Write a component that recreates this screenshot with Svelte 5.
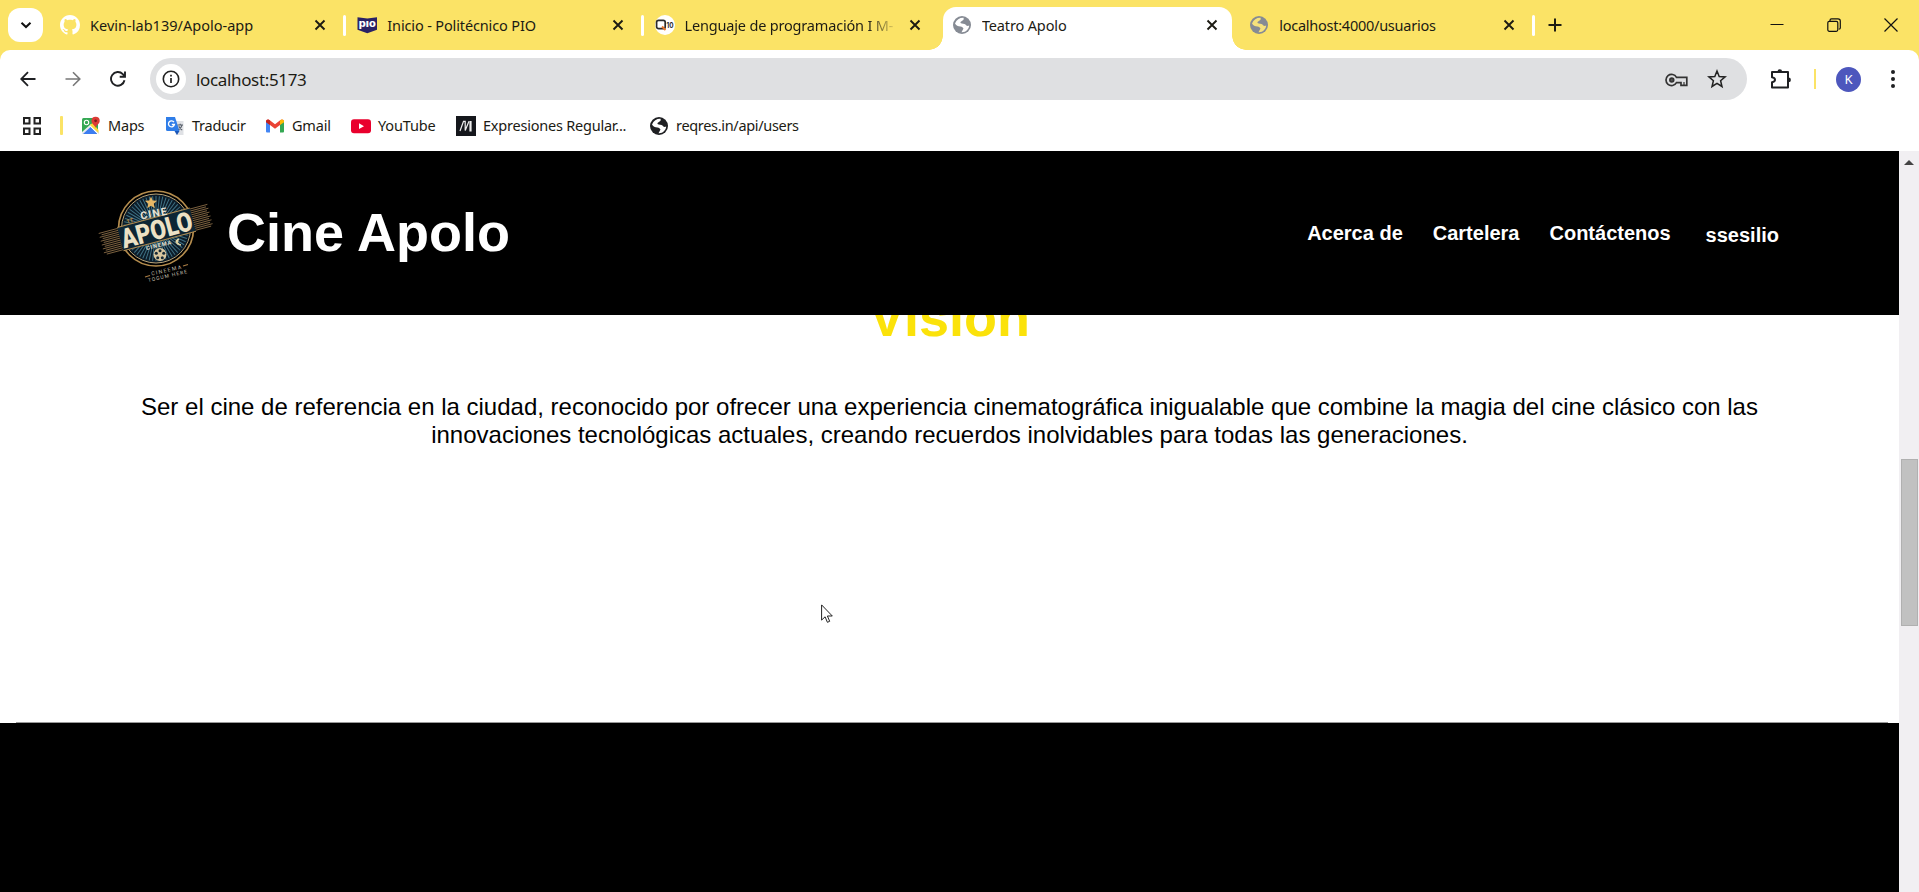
<script>
  const tabs = [
    { icon: 'github', title: 'Kevin-lab139/Apolo-app', ls: 0.02 },
    { icon: 'pio', title: 'Inicio - Politécnico PIO', ls: -0.14 },
    { icon: 'q10', title: 'Lenguaje de programación I M-', ls: -0.18, fade: true },
    { icon: 'globe', title: 'Teatro Apolo', ls: -0.14, active: true },
    { icon: 'globe', title: 'localhost:4000/usuarios', ls: -0.25 }
  ];
  const bookmarks = [
    { icon: 'maps', label: 'Maps', w: 59, ls: -0.2 },
    { icon: 'translate', label: 'Traducir', w: 75, ls: -0.25 },
    { icon: 'gmail', label: 'Gmail', w: 61, ls: -0.2 },
    { icon: 'youtube', label: 'YouTube', w: 80, ls: -0.15 },
    { icon: 'm', label: 'Expresiones Regular...', w: 168, ls: -0.22 },
    { icon: 'globeDark', label: 'reqres.in/api/users', w: 130, ls: -0.32 }
  ];
  const nav = ['Acerca de', 'Cartelera', 'Contáctenos'];
  const rays = Array.from({ length: 60 }, (_, i) => i * 6);
</script>

{#snippet globe(color, sea)}
  <svg viewBox="0 0 20 20" width="20" height="20">
    <circle cx="10" cy="10" r="9" fill={color} />
    <path fill={sea} d="M11.500 2.800C8 2.600 4.500 4.500 3 8.500 4 10.500 6 11.500 8.500 11.500c1.500 0 2 .8 3 2L9.500 17.200C14 17.500 17 14 17.200 10.500 15.500 11.500 14 10.500 13.500 9.500 12.500 8.500 10 9 8.500 8 8 6.500 10 6.200 10.500 5.500 12 5 11.800 3.500 11.500 2.800Z" />
  </svg>
{/snippet}

{#snippet icon(name, active)}
  {#if name === 'github'}
    <svg viewBox="0 0 16 16" width="20" height="20"><path fill="#fff" d="M8 0C3.580 0 0 3.580 0 8c0 3.540 2.290 6.530 5.470 7.590.4.070.55-.17.55-.38 0-.19-.01-.82-.01-1.490-2.010.37-2.530-.49-2.690-.94-.09-.23-.48-.94-.82-1.130-.28-.15-.68-.52-.01-.53.63-.01 1.080.58 1.230.82.72 1.210 1.870.87 2.330.66.070-.52.280-.87.510-1.070-1.780-.2-3.640-.89-3.640-3.950 0-.87.310-1.590.82-2.150-.08-.2-.36-1.020.080-2.120 0 0 .67-.21 2.200.82.640-.18 1.320-.27 2-.27s1.360.09 2 .27c1.530-1.040 2.200-.82 2.200-.82.440 1.100.160 1.920.080 2.120.510.56.82 1.270.82 2.150 0 3.070-1.870 3.750-3.650 3.950.290.25.540.73.540 1.480 0 1.070-.01 1.930-.01 2.200 0 .210.150.460.550.380A8.010 8.010 0 0 0 16 8c0-4.420-3.580-8-8-8Z" /></svg>
  {:else if name === 'pio'}
    <svg viewBox="0 0 20 20" width="20" height="20">
      <path fill="#2a2266" d="M.5 2.200 10.300 3.600l9.700-1.400v12.600L10.300 18.200.5 14.800Z" />
      <text x="10.300" y="12.200" text-anchor="middle" fill="#fff" font-family="Inter, sans-serif" font-size="9.500" font-weight="800" textLength="17" lengthAdjust="spacingAndGlyphs">pıo</text>
    </svg>
  {:else if name === 'q10'}
    <svg viewBox="0 0 20 20" width="20" height="20">
      <circle cx="10" cy="10" r="10" fill="#fff" />
      <rect x="1.600" y="5.300" width="8.600" height="8.400" rx="2" fill="none" stroke="#2b2b2b" stroke-width="1.700" />
      <path d="m7 11.500 3.500 3.500" stroke="#e8732a" stroke-width="2" />
      <text x="11.600" y="12.800" fill="#2b2b2b" font-family="Inter, sans-serif" font-size="7" font-weight="700" textLength="7" lengthAdjust="spacingAndGlyphs">10</text>
    </svg>
  {:else if name === 'globe'}
    {@render globe('#868b94', active ? '#fff' : '#f6e27c')}
  {:else if name === 'globeDark'}
    {@render globe('#1f2023', '#fff')}
  {:else if name === 'maps'}
    <svg viewBox="0 0 20 20" width="20" height="20">
      <rect x="1" y="2" width="16" height="16" rx="1.500" fill="#34a853" />
      <path d="m1 16 9-8 8 8v2H1Z" fill="#e8eaed" />
      <path d="M2 18 9.500 11l7 7Z" fill="#3c7df0" />
      <path d="m9 9 2.500-2 6 7v3Z" fill="#fdd835" />
      <path d="M9 10 17 18" stroke="#fff" stroke-width="1" />
      <circle cx="5.500" cy="6.500" r="2.200" fill="none" stroke="#fff" stroke-width="1.100" />
      <path d="M14.500 12c-.5-3-4-3.700-4-7.200a4 4 0 0 1 8.200 0c0 3.500-3.700 4.200-4.200 7.200Z" fill="#dc3b35" />
      <circle cx="14.600" cy="4.800" r="1.400" fill="#7c1c18" />
    </svg>
  {:else if name === 'translate'}
    <svg viewBox="0 0 20 20" width="20" height="20">
      <path d="M8 5h10.500v14H11Z" fill="#dfe1e5" />
      <path d="M1 1h9l4.500 14H2.500A1.500 1.500 0 0 1 1 13.500Z" fill="#2f7de8" />
      <path d="m9.500 15 2.500 4 2.500-4Z" fill="#1a56b8" />
      <path d="M9 6.200A3 3 0 1 0 9.400 8.500H6.800" fill="none" stroke="#fff" stroke-width="1.300" />
      <path d="M12.500 9H18M15.200 7.800V9m1.800.2c-.5 2-1.800 3.700-3.400 4.600m.2-3.500c.7 1.600 2 2.900 3.400 3.800" stroke="#555d68" stroke-width="1.100" fill="none" />
    </svg>
  {:else if name === 'gmail'}
    <svg viewBox="0 0 20 20" width="20" height="20">
      <path d="M1 5v10.500a1 1 0 0 0 1 1h3V8Z" fill="#4285f4" />
      <path d="M19 5v10.500a1 1 0 0 1-1 1h-3V8Z" fill="#34a853" />
      <path d="M1 5.500C1 3.500 3 2.800 4.500 4L10 8.200 15.500 4C17 2.800 19 3.500 19 5.500L15 9l-5 3.800L5 9Z" fill="#ea4335" />
      <path d="M1 5.500C1 4 2.300 3.200 3.500 3.500L5 4.500V9L1 6.200Z" fill="#c5221f" />
      <path d="M19 5.500c0-1.500-1.300-2.300-2.500-2L15 4.500V9l4-2.800Z" fill="#fbbc04" />
    </svg>
  {:else if name === 'youtube'}
    <svg viewBox="0 0 20 20" width="20" height="20"><rect x="0" y="3.200" width="20" height="14" rx="3" fill="#e9002d" /><path d="m8 7.300 5 2.900-5 2.900Z" fill="#fff" /></svg>
  {:else if name === 'm'}
    <svg viewBox="0 0 20 20" width="20" height="20"><path fill="#15171c" d="M0 0h20v20H0Z" /><path d="M4 15 7.500 5.300H9.200V14.500L13 5.300" fill="none" stroke="#eee" stroke-width="1.200" /><path d="M14.500 5v10.500" fill="none" stroke="#eee" stroke-width="2.200" /></svg>
  {/if}
{/snippet}

<div class="window">
  <div class="tabstrip">
    <button class="search" aria-label="Buscar pestañas"><svg viewBox="0 0 12 12" width="12" height="12"><path d="m1.500 3.700 4.500 4.300 4.500-4.300" fill="none" stroke="#111" stroke-width="2" /></svg></button>
    <div class="tabs">
      {#each tabs as tab, i}
        <div class="tab" class:active={tab.active} class:divided={i !== 2 && !tab.active}>
          <span class="favicon">{@render icon(tab.icon, tab.active)}</span>
          <span class="title"><span class:fade={tab.fade} style:letter-spacing="{tab.ls}px">{tab.title}</span></span>
          <svg class="close" viewBox="0 0 12 12" width="12" height="12"><path d="m1.500 1.500 9 9m0-9-9 9" stroke="#1c1b12" stroke-width="1.900" /></svg>
        </div>
      {/each}
    </div>
    <svg class="plus" viewBox="0 0 14 14" width="14" height="14"><path d="M7 .5v13M.5 7h13" stroke="#1f1d12" stroke-width="2" /></svg>
    <div class="controls">
      <svg viewBox="0 0 14 14" width="14" height="14"><path d="M.5 6.500h13" stroke="#111" /></svg>
      <svg viewBox="0 0 14 14" width="14" height="14"><g fill="none" stroke="#111" stroke-width="1.200"><rect x=".8" y="3.300" width="10" height="10" rx="1.500" /><path d="M3 3V2.200Q3 .8 4.500.8H11Q13.300.8 13.300 3V10q0 1.200-1.500 1.200" /></g></svg>
      <svg viewBox="0 0 14 14" width="14" height="14"><path d="m.5.500 13 13m0-13-13 13" stroke="#111" stroke-width="1.200" /></svg>
    </div>
  </div>

  <div class="chrome">
    <div class="toolbar">
      <svg class="nav-icon" viewBox="0 0 16 16" width="16" height="16"><path d="M15.500 8H1.500M8 1.200 1.200 8 8 14.800" fill="none" stroke="#1f2023" stroke-width="1.800" /></svg>
      <svg class="nav-icon" viewBox="0 0 16 16" width="16" height="16"><path d="M.5 8h14M8 1.200 14.800 8 8 14.800" fill="none" stroke="#777" stroke-width="1.600" /></svg>
      <svg class="nav-icon" viewBox="0 0 16 16" width="16" height="16"><path d="M14.500 9.200A6.800 6.800 0 1 1 12.800 3.200L14.500 5M15 .5v5.300H9.700" fill="none" stroke="#1f2023" stroke-width="1.900" /></svg>
      <div class="omnibox">
        <span class="info"><svg viewBox="0 0 18 18" width="18" height="18"><circle cx="9" cy="9" r="7.700" fill="none" stroke="#222" stroke-width="1.600" /><path d="M9 8v5M9 4.700v1.800" stroke="#222" stroke-width="1.700" /></svg></span>
        <span class="url">localhost:5173</span>
        <svg class="key" viewBox="0 0 24 14" width="24" height="14"><g fill="none" stroke="#333" stroke-width="1.700"><path d="M11.500 4.300A5.600 5.600 0 1 0 11.500 9.700H16V12.300h5.800V4.300Z" /><circle cx="6.800" cy="7" r="1.900" fill="#555" /><path d="M19 12V9" stroke-width="1.200" /></g></svg>
        <svg class="star" viewBox="0 0 20 20" width="20" height="20"><path d="m10 2 2.200 5.500 5.900.4-4.500 3.800 1.400 5.800-5-3.200-5 3.200 1.400-5.800L1.900 7.900l5.900-.4Z" fill="none" stroke="#222" stroke-width="1.500" /></svg>
      </div>
      <svg class="puzzle" viewBox="0 0 22 22" width="22" height="22"><path d="M2 4h16v15.500H2v-5.200q3-.4 3-2.500T2 9.200Z" fill="none" stroke="#1f2023" stroke-width="2" stroke-linejoin="round" /><path d="M7.500 3.500a2.300 2.300 0 0 1 4.600 0Zm11 6v4.800a2.400 2.400 0 0 0 0-4.800Z" fill="#1f2023" /></svg>
      <i class="bar"></i>
      <span class="avatar">K</span>
      <svg class="menu" viewBox="0 0 4 18" width="4" height="18"><circle cx="2" cy="2" r="2" /><circle cx="2" cy="9" r="2" /><circle cx="2" cy="16" r="2" /></svg>
    </div>
    <div class="bookmarks">
      <svg class="apps" viewBox="0 0 18 18" width="18" height="18"><path d="M1 1h5.500v5.500H1ZM11.500 1H17v5.500h-5.500ZM1 11.500h5.500V17H1ZM11.500 11.500H17V17h-5.500Z" fill="none" stroke="#222" stroke-width="2" /></svg>
      <i class="mark-bar"></i>
      {#each bookmarks as b}
        <span class="bookmark" style:width="{b.w}px" style:letter-spacing="{b.ls}px">{@render icon(b.icon, false)}<span class="label">{b.label}</span></span>
      {/each}
    </div>
  </div>

  <div class="viewport">
    <div class="page">
      <header>
        <svg class="logo" viewBox="0 0 130 110" width="130" height="110">
          <circle cx="65" cy="48.500" r="34" fill="#0c1c29" />
          <g stroke="#3f7285" stroke-width="1">
            {#each rays as a}<path d="M65 38V16" transform="rotate({a} 65 48.500)" />{/each}
          </g>
          <circle cx="65" cy="48.500" r="37.500" fill="none" stroke="#b58d4e" stroke-width="1.700" />
          <circle cx="65" cy="48.500" r="34.500" fill="none" stroke="#cfb98a" stroke-width=".9" />
          <g transform="rotate(-15 65 49)">
            <path d="M11 40h108v20H11Z" fill="#090807" />
            <path d="M8.500 38.500h20M101 38.500h20M11 40.500h17M102 40.500h17M8.500 42.500h20M101 42.500h20M11 44.500h17M102 44.500h17M8.500 46.500h20M101 46.500h20M11 48.500h17M102 48.500h17M8.500 50.500h20M101 50.500h20M11 52.500h17M102 52.500h17M8.500 54.500h20M101 54.500h20M11 56.500h17M102 56.500h17M8.500 58.500h20M101 58.500h20M11 60.500h17M102 60.500h17" stroke="#7d6340" stroke-width=".9" />
            <path d="M28 37.500h75v24H28Z" fill="#0d2534" />
            <path d="M28 37.500h75M28 61.500h75" stroke="#b08b50" stroke-width="1" />
            <text x="65.500" y="59.500" text-anchor="middle" fill="#ece1c5" font-family="Roboto, sans-serif" font-weight="900" font-size="27" textLength="73" lengthAdjust="spacingAndGlyphs">APOLO</text>
          </g>
          <path d="m60 16.500 1.700 4 4.400.3-3.400 2.900 1.200 4.500-3.900-2.500-3.900 2.500 1.200-4.500-3.400-2.900 4.400-.3Z" fill="#e6b866" />
          <g font-family="Roboto, sans-serif" fill="#e9e3d4" text-anchor="middle">
            <text x="63" y="37" font-size="10.500" font-weight="700" letter-spacing="1.200" transform="rotate(-10 63 33)">CINE</text>
            <text x="39" y="43" font-size="6" font-weight="700" fill="#b98a45" transform="rotate(-15 39 41)">1T</text>
            <text x="68" y="67" font-size="5.500" font-weight="700" letter-spacing="1" transform="rotate(-13 68 65)">CINEMA</text>
            <text x="76" y="92" font-size="5.300" letter-spacing="1.300" fill="#bdb6a6" transform="rotate(-13 76 91)">CINEEMA</text>
            <text x="77" y="97.500" font-size="5" letter-spacing="1" fill="#bdb6a6" transform="rotate(-13 77 96)">TOGUM HERE</text>
          </g>
          <path d="m54 97 5-1.500M92 86l5-1.500" stroke="#a67b43" stroke-width="1.300" />
          <circle cx="69" cy="74.500" r="6.500" fill="#d9c79e" />
          <g fill="#172a36"><circle cx="69" cy="70.700" r="1.500" /><circle cx="72.700" cy="73.300" r="1.500" /><circle cx="71.300" cy="77.700" r="1.500" /><circle cx="66.700" cy="77.700" r="1.500" /><circle cx="65.300" cy="73.300" r="1.500" /></g>
          <path d="M88 59q-3.500 4 2 6-5.500-.5-5-4 .5-2 3-2Z" fill="#eadba8" stroke="#eadba8" />
        </svg>
        <h1>Cine Apolo</h1>
        <nav>
          {#each nav as item}<span>{item}</span>{/each}
          <span class="user">ssesilio</span>
        </nav>
      </header>
      <section>
        <h2>Visión</h2>
        <p>Ser el cine de referencia en la ciudad, reconocido por ofrecer una experiencia cinematográfica inigualable que combine la magia del cine clásico con las innovaciones tecnológicas actuales, creando recuerdos inolvidables para todas las generaciones.</p>
        <hr />
      </section>
      <div class="dark"></div>
    </div>
    <div class="scrollbar">
      <svg viewBox="0 0 10 5" width="10" height="5"><path d="M0 5 5 0l5 5Z" fill="#444" /></svg>
      <div class="thumb"></div>
    </div>
  </div>
  <svg class="cursor" viewBox="0 0 12 20" width="12" height="20"><path d="M.6.900v15.200l3.500-3.300 2.300 5.500 2.300-1-2.300-5.300h4.900Z" fill="#fff" stroke="#222" stroke-width="1" /></svg>
</div>

<style>
  :global(body) { margin: 0; overflow: hidden; }
  * { box-sizing: border-box; }
  svg { display: block; flex: none; }
  .window { position: relative; height: 892px; display: flex; flex-direction: column; overflow: hidden; background: #fbe366; font-family: "Noto Sans", sans-serif; font-size: 14.500px; color: #1c1b14; }

  .tabstrip { height: 50px; flex: none; display: flex; padding-left: 8px; }
  .search { width: 35px; height: 34px; margin-top: 8px; border: 0; padding: 0; border-radius: 12px; background: #fff; display: grid; place-items: center; }
  .tabs { display: flex; margin-left: 5px; }
  .tab { position: relative; width: 297.300px; height: 50px; display: flex; align-items: center; padding: 0 18px 0 12px; }
  .favicon { width: 20px; }
  .title { flex: 1; margin-left: 10px; white-space: nowrap; overflow: hidden; line-height: 22px; padding-bottom: 1px; }
  .fade { background: linear-gradient(90deg, #1c1b14 88%, #fbe366 102%); background-clip: text; color: transparent; }
  .close { margin: 0 1px 0 8px; }
  .divided::after { content: ""; position: absolute; right: -1px; top: 15px; width: 3px; height: 21px; background: #fff; border-radius: 2px; }
  .active::before { content: ""; position: absolute; z-index: 0; left: 3px; right: 5px; top: 7px; bottom: 0; background: #fff; border-radius: 13px 13px 0 0; }
  .active::after { content: ""; position: absolute; left: -11px; right: -9px; bottom: 0; height: 14px; background: radial-gradient(circle at 0 0, transparent 13.500px, #fff 14px) left / 14px 14px no-repeat, radial-gradient(circle at 100% 0, transparent 13.500px, #fff 14px) right / 14px 14px no-repeat; }
  .active > * { position: relative; z-index: 1; }
  .plus { margin: 18px 0 0 14px; }
  .controls { margin: 18px 21px 0 auto; display: flex; gap: 43px; }

  .chrome { height: 101px; flex: none; background: #fff; border-radius: 10px 10px 0 0; }
  .toolbar { height: 58px; display: flex; align-items: center; padding: 0 24px 0 20px; }
  .nav-icon { margin-right: 29px; }
  .omnibox { width: 1597px; height: 42px; margin-left: -5px; border-radius: 21px; background: #dfe0e2; display: flex; align-items: center; padding: 0 20px 0 6px; }
  .info { width: 30px; height: 30px; border-radius: 50%; background: #fff; display: grid; place-items: center; }
  .url { flex: 1; padding-left: 10px; font-size: 17px; letter-spacing: -.35px; }
  .key { margin-top: 2px; }
  .star { margin-left: 18px; }
  .puzzle { margin-left: 23px; }
  .bar { width: 2px; height: 20px; margin-left: 22px; background: #fbe366; }
  .avatar { width: 25px; height: 25px; margin-left: 20px; border-radius: 50%; background: #4d57bd; color: #fff; font-size: 13px; line-height: 25px; text-align: center; }
  .menu { margin-left: auto; fill: #1f2023; }
  .bookmarks { height: 35px; display: flex; align-items: center; padding-left: 23px; }
  .apps { margin-right: 19px; }
  .mark-bar { width: 3px; height: 19px; background: #fbe366; border-radius: 1px; margin-right: 18px; }
  .bookmark { flex: none; display: flex; align-items: center; gap: 7px; margin-right: 25px; white-space: nowrap; }
  .label { padding-bottom: 2px; }

  .viewport { flex: 1; min-height: 0; display: flex; }
  .page { flex: 1; display: flex; flex-direction: column; background: #fff; font-family: "Liberation Sans", Arial, sans-serif; overflow: hidden; }
  header { position: relative; z-index: 1; flex: none; height: 164px; background: #000; color: #fff; display: flex; align-items: center; padding: 0 119px 0 91px; }
  .logo { margin-top: 3px; }
  h1 { margin: -2px 0 0 6px; font-size: 54px; line-height: 62px; }
  nav { margin: 2px 0 0 auto; display: flex; gap: 30px; font-size: 20px; font-weight: 700; line-height: 23px; }
  .user { padding: 2px 1px 0 5px; }
  section { flex: none; height: 408px; display: flex; flex-direction: column; color: #000; text-align: center; }
  h2 { margin: -29px 0 0; font-size: 54px; line-height: 62px; color: #fbe20a; }
  p { margin: 45px 130px 0; font-size: 24px; line-height: 28px; }
  hr { width: 1872px; margin: auto 11px 0 16px; border: 0; height: 1px; flex: none; background: #999; }
  .dark { flex: 1; background: #000; }
  .scrollbar { width: 20px; flex: none; background: #f1eff2; display: flex; flex-direction: column; align-items: center; padding-top: 9px; }
  .thumb { width: 17px; height: 167px; margin-top: 294px; background: #c1c1c1; border: 1px solid #b0b0b0; }
  .cursor { position: absolute; left: 821px; top: 604px; }
</style>
